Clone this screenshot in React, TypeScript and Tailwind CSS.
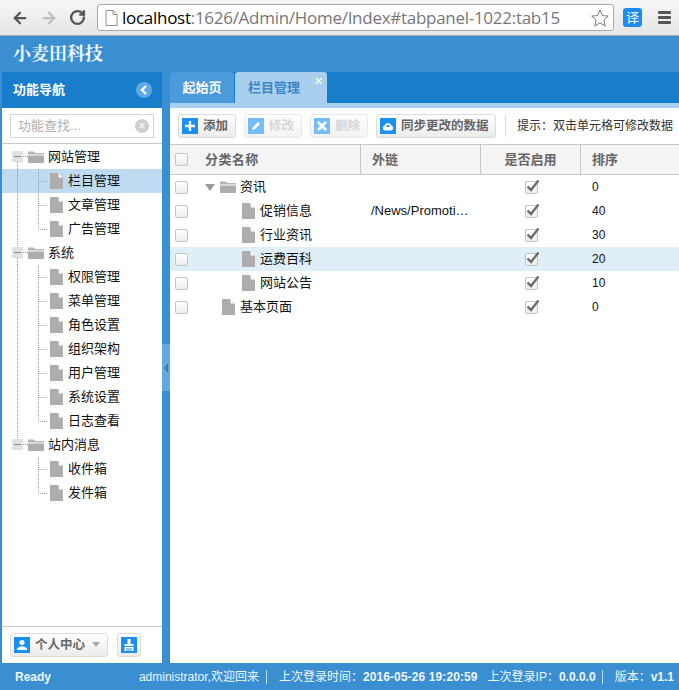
import { ArrowLeft, ArrowRight, RotateCw } from 'lucide-react';
import React from 'react';

const FONT = "font-['Liberation_Sans','Noto_Sans_CJK_SC',sans-serif]";

type NavItem = { label: string; children: string[] };

const navItems: NavItem[] = [
  { label: '网站管理', children: ['栏目管理', '文章管理', '广告管理'] },
  {
    label: '系统',
    children: ['权限管理', '菜单管理', '角色设置', '组织架构', '用户管理', '系统设置', '日志查看'],
  },
  { label: '站内消息', children: ['收件箱', '发件箱'] },
];

type GridRow = { name: string; depth: 0 | 1 | 2; folder?: boolean; link?: string; order: number; hover?: boolean };

const gridRows: GridRow[] = [
  { name: '资讯', depth: 1, folder: true, order: 0 },
  { name: '促销信息', depth: 2, link: '/News/Promoti…', order: 40 },
  { name: '行业资讯', depth: 2, order: 30 },
  { name: '运费百科', depth: 2, order: 20, hover: true },
  { name: '网站公告', depth: 2, order: 10 },
  { name: '基本页面', depth: 0, order: 0 },
];

const FileIcon = () => (
  <svg width="13" height="16" viewBox="0 0 13 16" className="shrink-0">
    <path d="M0 0H8L13 5V16H0Z" fill="#adadad" />
    <path d="M8.6 0.4L12.6 4.4H8.6Z" fill="#ffffff" />
  </svg>
);

const FolderIcon = () => (
  <svg width="16" height="12" viewBox="0 0 16 12" className="shrink-0">
    <path d="M0 0.5H6L7.5 2H16V3.5H0Z" fill="#b5b5b5" />
    <path d="M0 4.5H16V12H0Z" fill="#adadad" />
  </svg>
);

// 트리 점선 + 접기 버튼
const RootConnector = ({ first, last }: { first: boolean; last: boolean }) => (
  <svg width="26" height="24" viewBox="0 0 26 24" className="shrink-0">
    {!first && <path d="M15.5 0V6" stroke="#999" strokeDasharray="1 1" />}
    {!last && <path d="M15.5 17V24" stroke="#999" strokeDasharray="1 1" />}
    <path d="M21 11.5H26" stroke="#999" strokeDasharray="1 1" />
    <rect x="10" y="6" width="11" height="11" fill="#dfe1e4" />
    <path d="M12 11.5H19" stroke="#8a8a8a" />
  </svg>
);

const LeafConnector = ({ last, sectionLast }: { last: boolean; sectionLast: boolean }) => (
  <svg width="48" height="24" viewBox="0 0 48 24" className="shrink-0">
    {!sectionLast && <path d="M15.5 0V24" stroke="#999" strokeDasharray="1 1" />}
    <path d={last ? 'M36.5 0V12.5H45' : 'M36.5 0V24M36.5 12.5H45'} fill="none" stroke="#999" strokeDasharray="1 1" />
  </svg>
);

const Check = ({ checked = false }: { checked?: boolean }) => (
  <span className="relative block size-[13px] rounded-[2px] border border-[#c4c4c4] bg-gradient-to-b from-white to-[#ececec]">
    {checked && (
      <svg width="15" height="14" viewBox="0 0 15 14" className="absolute -top-[3px] -left-[1px]">
        <path d="M2.5 7.5L6 11L13.5 1.5" fill="none" stroke="#666" strokeWidth="2.2" />
      </svg>
    )}
  </span>
);

const BlueIcon = ({ children }: { children: React.ReactNode }) => (
  <span className="flex size-4 shrink-0 items-center justify-center bg-[#1a90f5]">{children}</span>
);

const ToolButton = ({
  icon,
  label,
  disabled,
  className,
}: {
  icon: React.ReactNode;
  label: string;
  disabled?: boolean;
  className: string;
}) => (
  <div
    className={`flex h-6 items-center gap-[5px] rounded-[3px] border border-[#dcdcdc] bg-gradient-to-b from-white to-[#ececec] pl-[3px] text-[12.5px] font-bold ${className} ${
      disabled ? 'text-[#bcbcbc] opacity-60' : 'text-[#666]'
    }`}
  >
    <BlueIcon>{icon}</BlueIcon>
    {label}
  </div>
);

const BrowserBar = () => (
  <div className="flex h-9 items-center border-b border-[#a9a9a9] bg-gradient-to-b from-[#f6f6f6] to-[#e6e6e6]">
    <ArrowLeft className="ml-[11px] size-[18px] text-[#555]" strokeWidth={3} />
    <ArrowRight className="ml-[11px] size-[18px] text-[#bdbdbd]" strokeWidth={3} />
    <RotateCw className="ml-[11px] size-[17px] text-[#555]" strokeWidth={3.4} />
    <div className="ml-[11px] flex h-[27px] w-[517px] items-center rounded-[3px] border border-[#a9a9a9] bg-white pl-[7px] font-['Open_Sans',sans-serif] text-[17px] tracking-[-0.28px] text-[#777]">
      <svg width="13" height="16" viewBox="0 0 13 16" className="shrink-0">
        <path d="M1 0.5H8L12 4.5V15.5H1Z" fill="#fff" stroke="#8f8f8f" />
        <path d="M8 0.5V4.5H12" fill="none" stroke="#8f8f8f" />
      </svg>
      <span className="ml-1 whitespace-nowrap">
        <span className="text-black">localhost</span>:1626/Admin/Home/Index#tabpanel-1022:tab15
      </span>
      <svg width="18" height="18" viewBox="0 0 18 18" className="mr-1 ml-auto shrink-0">
        <path d="M9 1L11.4 6.6L17.3 7.1L12.8 11L14.2 17L9 13.8L3.8 17L5.2 11L0.7 7.1L6.6 6.6Z" fill="#fff" stroke="#777" />
      </svg>
    </div>
    <span className="ml-[9px] flex size-[19px] items-center justify-center rounded-[3px] bg-[#1b8cf2] text-[13px] text-white">
      译
    </span>
    <span className="ml-4 flex w-[13px] flex-col gap-[2px]">
      <span className="h-[3px] rounded-[1px] bg-[#555]" />
      <span className="h-[3px] rounded-[1px] bg-[#555]" />
      <span className="h-[3px] rounded-[1px] bg-[#555]" />
    </span>
  </div>
);

const Sidebar = () => (
  <aside className="flex w-40 shrink-0 flex-col bg-white">
    <div className="flex h-9 items-center justify-between bg-[#187dcb] pr-[10px] pl-[11px] text-[13px] font-bold text-white">
      功能导航
      <span className="flex size-4 items-center justify-center rounded-full bg-[#62a8e2]">
        <svg width="8" height="10" viewBox="0 0 8 10">
          <path d="M6 1L2 5L6 9" fill="none" stroke="#fff" strokeWidth="2.4" />
        </svg>
      </span>
    </div>
    <div className="h-9 border-b border-[#c8c8c8] px-2 pt-[6px]">
      <div className="flex h-6 items-center justify-between border border-[#d4d4d4] pr-1 pl-[7px] text-[13px] text-[#b0b0b0]">
        功能查找...
        <span className="flex size-[14px] items-center justify-center rounded-full bg-[#cfcfcf] text-[12px] leading-none text-white">
          ×
        </span>
      </div>
    </div>
    <div className="mt-px flex-1 text-[13px] text-[#111]">
      {navItems.map((item, i) => (
        <div key={item.label}>
          <div className="flex h-6 items-center">
            <RootConnector first={i === 0} last={i === navItems.length - 1} />
            <FolderIcon />
            <span className="ml-1">{item.label}</span>
          </div>
          {item.children.map((child, j) => (
            <div
              key={child}
              className={`flex h-6 items-center ${child === '栏目管理' ? 'bg-[#bfdbf1]' : ''}`}
            >
              <LeafConnector last={j === item.children.length - 1} sectionLast={i === navItems.length - 1} />
              <FileIcon />
              <span className="ml-[5px]">{child}</span>
            </div>
          ))}
        </div>
      ))}
    </div>
    <div className="flex h-[37px] items-center gap-[9px] border-t border-[#c8c8c8] pl-2">
      <div className="flex h-6 w-[98px] items-center gap-[5px] rounded-[3px] border border-[#dcdcdc] bg-gradient-to-b from-white to-[#ececec] pl-[3px] text-[12.5px] font-bold text-[#666]">
        <BlueIcon>
          <svg width="12" height="12" viewBox="0 0 12 12">
            <circle cx="6" cy="3.5" r="2.5" fill="#fff" />
            <path d="M1 11V9.5L4 7.5H8L11 9.5V11Z" fill="#fff" />
          </svg>
        </BlueIcon>
        个人中心
        <svg width="10" height="6" viewBox="0 0 10 6" className="ml-[1px]">
          <path d="M1 0H9L5 5Z" fill="#a8a8a8" />
        </svg>
      </div>
      <div className="flex h-6 w-6 items-center justify-center rounded-[3px] border border-[#dcdcdc] bg-gradient-to-b from-white to-[#ececec]">
        <BlueIcon>
          <svg width="12" height="14" viewBox="0 0 12 14">
            <path d="M4.5 1H7.5V6H10.5V8H1.5V6H4.5ZM1.5 9H10.5V13H1.5Z" fill="#fff" />
            <path d="M4 10V13M6 10V13M8 10V13" stroke="#1a90f5" />
          </svg>
        </BlueIcon>
      </div>
    </div>
  </aside>
);

const Splitter = () => (
  <div className="flex w-2 shrink-0 items-center bg-[#3a8fd2]">
    <div className="flex h-[47px] w-2 items-center justify-center bg-[#62a9e0]">
      <svg width="4" height="10" viewBox="0 0 4 10">
        <path d="M4 0V10L0 5Z" fill="#2f7fc0" />
      </svg>
    </div>
  </div>
);

const Tabs = () => (
  <div className="flex h-9 shrink-0 flex-col bg-[#187dcb]">
    <div className="flex h-[31px] items-end text-[13px] font-bold">
      <div className="flex h-[31px] w-[64px] items-center justify-center rounded-t-[3px] bg-[#4b9bdc] text-white">
        起始页
      </div>
      <div className="relative ml-px flex h-[31px] w-[92px] items-center rounded-t-[3px] bg-[#a8cfee] pl-[13px] text-[#3c85c6]">
        栏目管理
        <span className="absolute top-[1px] right-[4px] text-[15px] leading-[15px] font-normal text-white">×</span>
      </div>
    </div>
    <div className="h-[5px] bg-[#a8cfee]" />
  </div>
);

const Toolbar = () => (
  <div className="flex h-[37px] shrink-0 items-center gap-2 border-b border-[#c8c8c8] pl-2">
    <ToolButton
      className="w-[58px]"
      label="添加"
      icon={
        <svg width="12" height="12" viewBox="0 0 12 12">
          <path d="M6 1V11M1 6H11" stroke="#fff" strokeWidth="2.4" />
        </svg>
      }
    />
    <ToolButton
      className="w-[58px]"
      label="修改"
      disabled
      icon={
        <svg width="12" height="12" viewBox="0 0 12 12">
          <path d="M2 10L3 7L8 2L10 4L5 9Z" fill="#fff" />
        </svg>
      }
    />
    <ToolButton
      className="w-[58px]"
      label="删除"
      disabled
      icon={
        <svg width="12" height="12" viewBox="0 0 12 12">
          <path d="M2 2L10 10M10 2L2 10" stroke="#fff" strokeWidth="2.8" />
        </svg>
      }
    />
    <ToolButton
      className="w-[120px]"
      label="同步更改的数据"
      icon={
        <svg width="12" height="10" viewBox="0 0 12 10">
          <path d="M3 9.5A2.5 2.5 0 0 1 2.6 4.6A3.5 3.5 0 0 1 9.4 4.6A2.5 2.5 0 0 1 9 9.5Z" fill="#fff" />
          <path d="M6 3.5L3.8 6H8.2Z" fill="#1a90f5" />
        </svg>
      }
    />
    <span className="ml-[1px] h-[22px] w-px bg-[#dcdcdc]" />
    <span className="ml-[3px] text-[12px] whitespace-nowrap text-[#333]">提示：双击单元格可修改数据</span>
  </div>
);

const Grid = () => (
  <div className="min-h-0 flex-1 text-[13px] text-[#111]">
    <div className="flex h-[30px] border-b border-[#c8c8c8] bg-[#f4f4f4] font-bold text-[#666]">
      <div className="flex w-6 items-center pl-[5px]">
        <Check />
      </div>
      <div className="flex w-[167px] items-center border-r border-[#c8c8c8] pl-[11px] tracking-[0.4px]">分类名称</div>
      <div className="flex w-[120px] items-center border-r border-[#c8c8c8] pl-[11px]">外链</div>
      <div className="flex w-[100px] items-center justify-center border-r border-[#c8c8c8]">是否启用</div>
      <div className="flex flex-1 items-center pl-[11px]">排序</div>
    </div>
    {gridRows.map((row) => (
      <div key={row.name} className={`flex h-6 items-center ${row.hover ? 'bg-[#e0eef8]' : ''}`}>
        <div className="w-6 pl-[5px]">
          <Check />
        </div>
        <div
          className={`flex w-[167px] items-center ${
            row.depth === 2 ? 'pl-[48px]' : row.depth === 1 ? 'pl-[11px]' : 'pl-7'
          }`}
        >
          {row.folder && (
            <svg width="10" height="7" viewBox="0 0 10 7" className="mr-[5px]">
              <path d="M0 0H10L5 7Z" fill="#9a9a9a" />
            </svg>
          )}
          {row.folder ? <FolderIcon /> : <FileIcon />}
          <span className={row.folder ? 'ml-1' : 'ml-[5px]'}>{row.name}</span>
        </div>
        <div className="w-[120px] pl-[10px] text-[13px] whitespace-nowrap">{row.link}</div>
        <div className="flex w-[100px] justify-center">
          <Check checked />
        </div>
        <div className="pl-[11px] text-[12px]">{row.order}</div>
      </div>
    ))}
  </div>
);

const StatusBar = () => (
  <div className="flex h-[27px] shrink-0 items-center justify-between bg-[#3a8fd2] pr-[5px] pl-[15px] text-[12px] text-[#eef6fd]">
    <span className="font-bold">Ready</span>
    <div className="flex items-center whitespace-nowrap">
      administrator,欢迎回来
      <span className="mr-[12px] ml-[7px] h-[14px] w-px bg-[#bcdcf5]" />
      上次登录时间：<b className="tracking-[0.1px]">2016-05-26 19:20:59</b>
      <span className="ml-[10px]">上次登录IP：</span>
      <b>0.0.0.0</b>
      <span className="mr-[12px] ml-[6px] h-[14px] w-px bg-[#bcdcf5]" />
      版本：<b>v1.1</b>
    </div>
  </div>
);

const App = () => (
  <div className={`flex h-[690px] w-[679px] flex-col overflow-hidden bg-white ${FONT}`}>
    <BrowserBar />
    <div className="flex h-9 shrink-0 items-center border-l-2 border-[#3a8fd2] bg-[#3a8fd2] pl-[11px] font-['Liberation_Serif','Noto_Serif_CJK_SC','Noto_Sans_CJK_SC',serif] text-[18px] font-bold text-[#f2f8fd]">
      小麦田科技
    </div>
    <div className="flex min-h-0 flex-1 border-l-2 border-[#3a8fd2]">
      <Sidebar />
      <Splitter />
      <main className="flex min-w-0 flex-1 flex-col bg-white">
        <Tabs />
        <Toolbar />
        <Grid />
      </main>
    </div>
    <StatusBar />
  </div>
);

export default App;
